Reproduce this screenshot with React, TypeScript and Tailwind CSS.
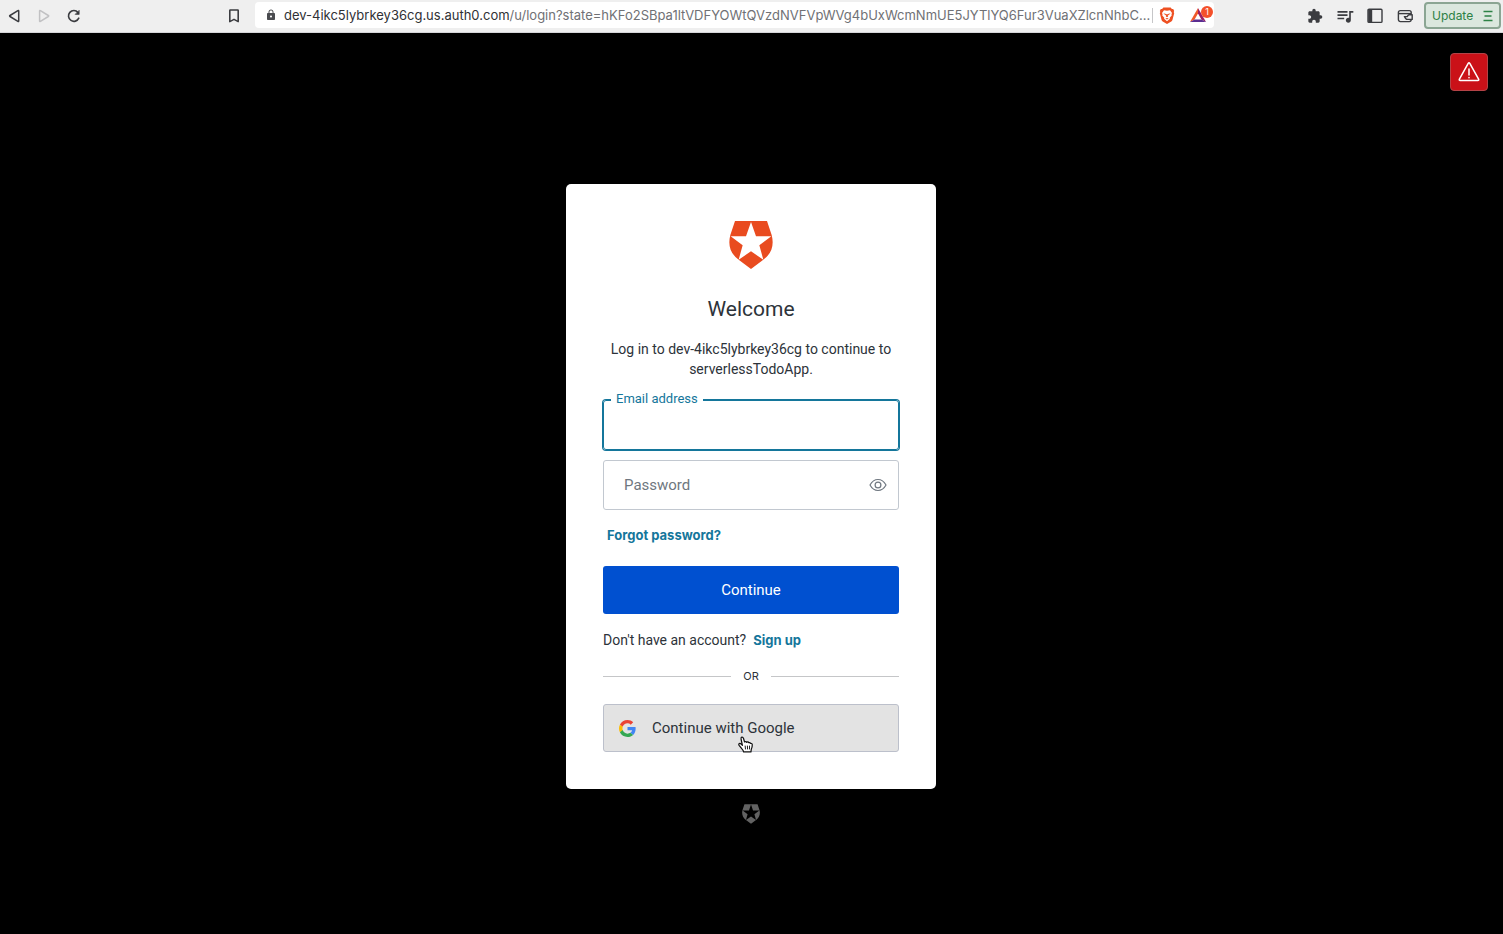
import type { ReactNode } from "react";
import { MdExtension, MdLock, MdQueueMusic } from "react-icons/md";

function Auth0Mark({ className }: { className: string }) {
  return (
    <svg viewBox="0 0 132 144" fill="currentColor" fillRule="evenodd" className={className} aria-hidden="true">
      <path d="M18 0H114L128 42C136 72 128 98 103 116L66 144L29 116C4 98 -4 72 4 42ZM66 3L51 46H5L41 73L29 116L66 91L103 116L91 73L127 46H81Z" />
    </svg>
  );
}

function GoogleMark() {
  return (
    <svg viewBox="0 0 48 48" className="size-[17px]" aria-hidden="true">
      <path fill="#EA4335" d="M24 9.5c3.54 0 6.71 1.22 9.21 3.6l6.85-6.85C35.9 2.38 30.47 0 24 0 14.62 0 6.51 5.38 2.56 13.22l7.98 6.19C12.43 13.72 17.74 9.5 24 9.5z" />
      <path fill="#4285F4" d="M46.98 24.55c0-1.57-.15-3.09-.38-4.55H24v9.02h12.94c-.58 2.96-2.26 5.48-4.78 7.18l7.73 6c4.51-4.18 7.09-10.36 7.09-17.65z" />
      <path fill="#FBBC05" d="M10.53 28.59c-.48-1.45-.76-2.99-.76-4.59s.27-3.14.76-4.59l-7.98-6.19C.92 16.46 0 20.12 0 24c0 3.88.92 7.54 2.56 10.78l7.97-6.19z" />
      <path fill="#34A853" d="M24 48c6.48 0 11.93-2.13 15.89-5.81l-7.73-6c-2.15 1.45-4.92 2.3-8.16 2.3-6.26 0-11.57-4.22-13.47-9.91l-7.98 6.19C6.51 42.62 14.62 48 24 48z" />
    </svg>
  );
}

function BraveMark() {
  return (
    <svg viewBox="0 0 16 17" className="h-[17px] w-4" aria-hidden="true">
      <path fill="#ee5022" d="M4.400 .6h7.200l1.300 1.500 1.300-.1 1 1.900-.5 1 .5 1.400-1.700 6.400q-.3 1-1.200 1.700L8 17l-4.300-2.600q-.9-.7-1.200-1.700L.8 6.300l.5-1.400-.5-1 1-1.900 1.300.1z" />
      <path fill="#fff" d="M5 3.200l3 .6 3-.6 2 2.700-.5 1.400.2 1.200-2 2.300.2 1L8 14.200l-2.900-2.400.2-1-2-2.300.2-1.200L3 5.900z" />
      <path fill="#ee5022" d="M4.400 6.300l2.700.7-.5 1.500zM11.600 6.300l-2.700.7.5 1.500zM7.300 7h1.400l.4 2.400L8 10.200l-1.100-.8zM6.300 11.400L8 10.900l1.700.5L8 12.600z" />
    </svg>
  );
}

function IconButton({ label, children, className = "" }: { label: string; children: ReactNode; className?: string }) {
  return (
    <button type="button" aria-label={label} className={`flex size-4 shrink-0 items-center justify-center ${className}`}>
      {children}
    </button>
  );
}

function Toolbar() {
  return (
    <header className="flex h-[33px] shrink-0 items-center border-b border-[#d5d5d8] bg-[#efefef] pr-[2px] pl-[6px] text-[#3b3c40]">
      <nav className="flex items-center gap-[14px]">
        <IconButton label="Back">
          <svg viewBox="0 0 16 16" className="size-4" fill="none" stroke="currentColor" strokeWidth="1.5" strokeLinejoin="round">
            <path d="M12.700 3v10q0 .8-.8.3L4 8.5q-.8-.5 0-1L11.900 2.700q.8-.5.8.3z" />
          </svg>
        </IconButton>
        <IconButton label="Forward" className="text-[#c1c1c3]">
          <svg viewBox="0 0 16 16" className="size-4" fill="none" stroke="currentColor" strokeWidth="1.5" strokeLinejoin="round">
            <path d="M3.600 3v10q0 .8.8.3L12.300 8.500q.8-.5 0-1L4.400 2.700q-.8-.5-.8.3z" />
          </svg>
        </IconButton>
        <IconButton label="Reload">
          <svg viewBox="0 0 16 16" className="size-4" fill="none" stroke="currentColor" strokeWidth="1.600" strokeLinecap="round">
            <path d="M12.800 10.200A5.400 5.400 0 1 1 12 4.400" />
            <path d="M13.200 2.600v3.800H9.400z" fill="currentColor" strokeWidth=".6" strokeLinejoin="round" />
          </svg>
        </IconButton>
      </nav>

      <IconButton label="Bookmark this page" className="mr-[13px] ml-[144px]">
        <svg viewBox="0 0 16 16" className="size-4" fill="none" stroke="currentColor" strokeWidth="1.600" strokeLinejoin="round">
          <path d="M4.200 2h7.600q.4 0 .4.400v11.200L8 11.400l-4.200 2.200V2.400q0-.4.4-.4z" />
        </svg>
      </IconButton>

      <div className="mb-[2px] flex h-[26px] min-w-0 flex-1 items-center rounded-[4px] bg-white pl-[10px]">
        <MdLock className="size-3 shrink-0 text-[#4a4b4f]" aria-hidden="true" />
        <p className="ml-[7px] min-w-0 flex-1 truncate text-[13px] leading-5 text-[#707175]">
          <span className="text-[#303135]">dev-4ikc5lybrkey36cg.us.auth0.com</span>
          /u/login?state=hKFo2SBpa1ltVDFYOWtQVzdNVFVpWVg4bUxWcmNmUE5JYTlYQ6Fur3VuaXZlcnNhbC...
        </p>
        <span className="h-[15px] w-px shrink-0 bg-[#c6c6c8]" />
        <IconButton label="Brave Shields" className="ml-[6px]">
          <BraveMark />
        </IconButton>
        <button type="button" aria-label="Brave Rewards" className="relative ml-[14px] flex h-[22px] w-[25px] shrink-0 items-center">
          <svg viewBox="0 0 18 16" className="h-4 w-[18px]" aria-hidden="true">
            <path fill="#f05a2b" d="M9 1L1 15l4.600-2.600L9 6.400z" />
            <path fill="#9e1f63" d="M9 1l8 14-4.600-2.600L9 6.400z" />
            <path fill="#5b2d91" d="M1 15h16l-4.600-2.600H5.600z" />
          </svg>
          <span className="absolute top-[2px] right-[1px] flex size-3 items-center justify-center rounded-full bg-[#f4502a] text-[9px] leading-3 text-white">
            1
          </span>
        </button>
      </div>

      <div className="ml-[93px] flex items-center gap-[14px]">
        <IconButton label="Extensions">
          <MdExtension className="size-4" />
        </IconButton>
        <IconButton label="Media controls">
          <MdQueueMusic className="size-5 shrink-0" />
        </IconButton>
        <IconButton label="Side panel">
          <svg viewBox="0 0 16 16" className="size-4" fill="none" stroke="currentColor" strokeWidth="1.400">
            <rect x="1" y="1.200" width="14" height="13.200" rx="1" />
            <path d="M1.200 1.500h4v12.700h-4z" fill="currentColor" stroke="none" />
          </svg>
        </IconButton>
        <IconButton label="Wallet">
          <svg viewBox="0 0 16 16" className="size-4" fill="none" stroke="currentColor" strokeWidth="1.400" strokeLinejoin="round">
            <rect x="1.400" y="2.600" width="12.800" height="11" rx="2" />
            <path d="M1.600 5.600h12.400" />
            <path d="M15.200 6.800v4.600h-4.600q-1.200 0-1.900-.9L7.400 8.600h2.800l1-1.300q.4-.5 1-.5z" fill="#efefef" />
          </svg>
        </IconButton>
      </div>
      <button
        type="button"
        className="mb-[2px] ml-[11px] flex h-[27px] w-[77px] shrink-0 items-center justify-between rounded-[4px] border-2 border-[#8ba593] bg-[#dbe7de] px-[6px] pt-[1px] font-['Inter','Liberation_Sans',sans-serif] text-xs leading-5 text-[#2d8145]"
      >
        Update
        <svg viewBox="0 0 10 12" className="h-3 w-[10px]" fill="none" stroke="currentColor" strokeWidth="1.400" aria-hidden="true">
          <path d="M.5 1.500h9M1.500 6h7M.5 10.500h9" />
        </svg>
      </button>
    </header>
  );
}

function HandCursor() {
  return (
    <svg viewBox="0 0 16 18" className="absolute top-[31px] left-[134px] h-[17px] w-[15px]" fill="#fff" stroke="#111" strokeWidth="1.300" strokeLinejoin="round" aria-hidden="true">
      <path d="M6 16.900Q5.800 15.400 4.200 13.700L1.200 9.900Q.4 8.500 1.400 8 2.300 7.600 3.400 8.600L4.700 9.900 3.300 3.400Q2.900 1.400 4 1.100 5.300.8 5.900 2.600L7 6.300Q8.200 5.200 9.300 6.600 10.500 5.700 11.500 7.100 12.700 6.500 13.500 7.800 15 7.600 15.200 9.200 15.300 12 14.200 14L13.800 16.900Z" />
      <path d="M7.600 10.200l.4 4M10 10.200l.2 4M12.300 10.200v4" strokeWidth="1" />
    </svg>
  );
}

export default function App() {
  return (
    <div className="flex min-h-screen flex-col bg-black font-['Inter','Liberation_Sans',sans-serif] text-[13px] text-[#2d333a]">
      <Toolbar />
      <div className="relative flex flex-1 flex-col items-center pt-[151px] pr-[17px] pb-10 pl-4">
        <button
          type="button"
          aria-label="Warning"
          className="absolute top-5 right-[15px] flex size-[38px] items-center justify-center rounded-[4px] border border-[#b34347] bg-[#ca1118] text-white"
        >
          <svg viewBox="0 0 24 24" className="size-6" fill="none" stroke="currentColor" strokeWidth="1.500" strokeLinejoin="round" strokeLinecap="round">
            <path d="M11.200 3.300q.8-1.300 1.600 0l8.800 15.800q.6 1.400-.8 1.400H3.200q-1.400 0-.8-1.400z" />
            <path d="M12 9v6M12 17.500v.3" />
          </svg>
        </button>

        <main className="w-full max-w-[370px] rounded-[5px] bg-white p-[37px]">
          <div className="flex flex-col items-center text-center">
            <Auth0Mark className="h-12 w-11 text-[#e94b1f]" />
            <h1 className="mt-6 font-['Roboto',sans-serif] text-[21px] leading-8">Welcome</h1>
            <p className="mt-[14px] font-['Roboto',sans-serif] text-sm leading-5">
              Log in to dev-4ikc5lybrkey36cg to continue to serverlessTodoApp.
            </p>
          </div>

          <form className="mt-[21px]" onSubmit={(event) => event.preventDefault()}>
            <div className="relative">
              <input
                id="email"
                type="email"
                className="block h-[50px] w-full rounded-[3px] border border-[#14769b] px-4 text-[15px] ring-1 ring-[#14769b] outline-none"
              />
              <label htmlFor="email" className="absolute -top-[11px] left-2 bg-white px-[5px] font-['Roboto',sans-serif] leading-5 text-[#14769b]">
                Email address
              </label>
            </div>
            <div className="relative mt-[10px]">
              <input
                id="password"
                type="password"
                className="block h-[50px] w-full rounded-[3px] border border-[#c2c8d0] pr-12 pl-5 text-[15px] outline-none"
              />
              <label htmlFor="password" className="absolute top-[15px] left-[21px] font-['Roboto',sans-serif] text-[15px] leading-5 text-[#6f7780]">
                Password
              </label>
              <button type="button" aria-label="Show password" className="absolute top-4 right-3 text-[#6f7780]">
                <svg viewBox="0 0 18 18" className="size-[18px]" fill="none" stroke="currentColor" strokeWidth="1.200">
                  <path d="M1 9q3-5.500 8-5.500T17 9q-3 5.500-8 5.500T1 9z" strokeLinejoin="round" />
                  <circle cx="9" cy="9" r="2.900" />
                </svg>
              </button>
            </div>
            <a href="#forgot" className="mt-[15px] ml-1 block w-fit leading-5 font-bold text-[#14769b]">
              Forgot password?
            </a>
            <button type="submit" className="mt-[21px] h-12 w-full rounded-[3px] bg-[#0050d0] font-['Roboto',sans-serif] text-[15px] text-white">
              Continue
            </button>
          </form>

          <p className="mt-4 flex items-baseline gap-[7px] leading-5">
            <span className="font-['Roboto',sans-serif] text-sm leading-5">Don't have an account?</span>
            <a href="#signup" className="font-bold text-[#14769b]">
              Sign up
            </a>
          </p>

          <div className="mt-4 flex items-center gap-3 text-[11px] leading-5 before:h-px before:flex-1 before:bg-[#c5c6c8] after:h-px after:flex-1 after:bg-[#c5c6c8]">
            OR
          </div>

          <button
            type="button"
            className="relative mt-[18px] flex h-12 w-full items-center gap-4 rounded-[3px] border border-[#bcc0cb] bg-[#e3e3e3] px-[15px] font-['Roboto',sans-serif] text-[15px]"
          >
            <GoogleMark />
            Continue with Google
            <HandCursor />
          </button>
        </main>

        <footer className="mt-[15px]">
          <a href="#auth0" aria-label="Auth0" className="block text-[#626262]">
            <Auth0Mark className="h-5 w-[18px]" />
          </a>
        </footer>
      </div>
    </div>
  );
}
